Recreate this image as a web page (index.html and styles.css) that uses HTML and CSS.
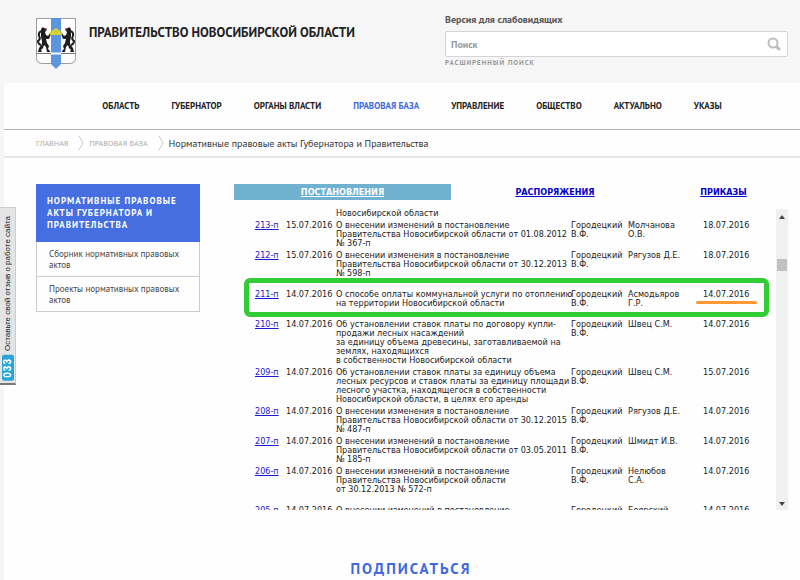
FILE: index.html
```html
<!DOCTYPE html>
<html lang="ru">
<head>
    <meta charset="UTF-8">
    <meta name="viewport" content="width=device-width, initial-scale=1.0">
    <title>Правительство Новосибирской области</title>
    <link rel="stylesheet" href="styles.css">
</head>
<body>
    <header class="header">
        <a class="logo" href="#" aria-label="Главная">
            <svg width="40" height="52" viewBox="0 0 40 52">
                <path d="M.5 .5h39v39q0 6-6 6H6.500q-6 0-6-6z" fill="#fff" stroke="#9a9a9a"/>
                <path d="M15 0h10v46l-5 5-5-5z" fill="#5b95e2"/>
                <path d="M1 35.500h38" stroke="#777"/>
                <path d="M15 35.500h10" stroke="#fff" stroke-width="2"/>
                <g id="sable" fill="#1f1f1f">
                    <path d="M5 11l2-2 1 1 3 1-1 2-1 1 1 3 2 1 2-3 1 1-2 5-3 0 1 4 2 3-1 3 2 2v1h-3l-1-5-2-2-1 3-2 2 1 2H2l1-4 3-4 0-3-1-4z"/>
                    <path d="M5 13q-3 2-2 5 2 3-1 5 0 3 3 4" fill="none" stroke="#1f1f1f" stroke-width="2"/>
                    <path d="M9 11h2" stroke="#d33"/>
                </g>
                <use href="#sable" transform="matrix(-1 0 0 1 40 0)"/>
                <path d="M14 17v-3l6-4 6 4v3z" fill="#d6cf3a"/>
            </svg>
        </a>
        <h1 class="title">ПРАВИТЕЛЬСТВО НОВОСИБИРСКОЙ ОБЛАСТИ</h1>
        <form class="search">
            <a class="vision" href="#">Версия для слабовидящих</a>
            <div class="search-box">
                <input type="text" placeholder="Поиск" aria-label="Поиск">
                <button type="submit" aria-label="Найти">
                    <svg width="14" height="14" viewBox="0 0 14 14" fill="none" stroke="#bdbdbd">
                        <circle cx="6" cy="6" r="4.500" stroke-width="2"/>
                        <path d="M10 10l2 2" stroke-width="3" stroke-linecap="round"/>
                    </svg>
                </button>
            </div>
            <a class="advanced" href="#">РАСШИРЕННЫЙ ПОИСК</a>
        </form>
    </header>

    <div class="page">
        <nav class="menu">
            <a href="#">ОБЛАСТЬ</a>
            <a href="#">ГУБЕРНАТОР</a>
            <a href="#">ОРГАНЫ ВЛАСТИ</a>
            <a href="#" class="active">ПРАВОВАЯ БАЗА</a>
            <a href="#">УПРАВЛЕНИЕ</a>
            <a href="#">ОБЩЕСТВО</a>
            <a href="#">АКТУАЛЬНО</a>
            <a href="#">УКАЗЫ</a>
        </nav>

        <div class="crumbs">
            <a href="#">ГЛАВНАЯ</a>
            <svg width="6" height="14" viewBox="0 0 6 14" fill="none" stroke="#ccc"><path d="M1 0l4 7-4 7"/></svg>
            <a href="#">ПРАВОВАЯ БАЗА</a>
            <svg width="6" height="14" viewBox="0 0 6 14" fill="none" stroke="#ccc"><path d="M1 0l4 7-4 7"/></svg>
            <span>Нормативные правовые акты Губернатора и Правительства</span>
        </div>

        <div class="content">
            <aside class="sidebar">
                <h2>НОРМАТИВНЫЕ ПРАВОВЫЕ АКТЫ ГУБЕРНАТОРА И ПРАВИТЕЛЬСТВА</h2>
                <a href="#">Сборник нормативных правовых актов</a>
                <a href="#">Проекты нормативных правовых актов</a>
            </aside>

            <main class="docs">
                <div class="tabs">
                    <a href="#" class="active">ПОСТАНОВЛЕНИЯ</a>
                    <a href="#">РАСПОРЯЖЕНИЯ</a>
                    <a href="#">ПРИКАЗЫ</a>
                </div>
                <div class="list">
                    <div class="list-view">
                        <table>
                            <colgroup>
                                <col class="c-num"><col class="c-date"><col class="c-name"><col class="c-sign"><col class="c-auth"><col class="c-pub">
                            </colgroup>
                            <tr>
                                <td></td><td></td>
                                <td>Новосибирской области</td>
                                <td></td><td></td><td></td>
                            </tr>
                            <tr>
                                <td><a href="#">213-п</a></td>
                                <td>15.07.2016</td>
                                <td>О внесении изменений в постановление<br>Правительства Новосибирской области от 01.08.2012<br>№ 367-п</td>
                                <td>Городецкий<br>В.Ф.</td>
                                <td>Молчанова<br>О.В.</td>
                                <td>18.07.2016</td>
                            </tr>
                            <tr class="spaced">
                                <td><a href="#">212-п</a></td>
                                <td>15.07.2016</td>
                                <td>О внесении изменения в постановление<br>Правительства Новосибирской области от 30.12.2013<br>№ 598-п</td>
                                <td>Городецкий<br>В.Ф.</td>
                                <td>Рягузов Д.Е.</td>
                                <td>18.07.2016</td>
                            </tr>
                            <tr class="spaced">
                                <td><a href="#">211-п</a></td>
                                <td>14.07.2016</td>
                                <td>О способе оплаты коммунальной услуги по отоплению<br>на территории Новосибирской области</td>
                                <td>Городецкий<br>В.Ф.</td>
                                <td>Асмодьяров<br>Г.Р.</td>
                                <td><span class="underlined">14.07.2016</span></td>
                            </tr>
                            <tr>
                                <td><a href="#">210-п</a></td>
                                <td>14.07.2016</td>
                                <td>Об установлении ставок платы по договору купли-<br>продажи лесных насаждений<br>за единицу объема древесины, заготавливаемой на<br>землях, находящихся<br>в собственности Новосибирской области</td>
                                <td>Городецкий<br>В.Ф.</td>
                                <td>Швец С.М.</td>
                                <td>14.07.2016</td>
                            </tr>
                            <tr>
                                <td><a href="#">209-п</a></td>
                                <td>14.07.2016</td>
                                <td>Об установлении ставок платы за единицу объема<br>лесных ресурсов и ставок платы за единицу площади<br>лесного участка, находящегося в собственности<br>Новосибирской области, в целях его аренды</td>
                                <td>Городецкий<br>В.Ф.</td>
                                <td>Швец С.М.</td>
                                <td>15.07.2016</td>
                            </tr>
                            <tr>
                                <td><a href="#">208-п</a></td>
                                <td>14.07.2016</td>
                                <td>О внесении изменения в постановление<br>Правительства Новосибирской области от 30.12.2015<br>№ 487-п</td>
                                <td>Городецкий<br>В.Ф.</td>
                                <td>Рягузов Д.Е.</td>
                                <td>14.07.2016</td>
                            </tr>
                            <tr>
                                <td><a href="#">207-п</a></td>
                                <td>14.07.2016</td>
                                <td>О внесении изменений в постановление<br>Правительства Новосибирской области от 03.05.2011<br>№ 185-п</td>
                                <td>Городецкий<br>В.Ф.</td>
                                <td>Шмидт И.В.</td>
                                <td>14.07.2016</td>
                            </tr>
                            <tr class="spaced">
                                <td><a href="#">206-п</a></td>
                                <td>14.07.2016</td>
                                <td>О внесении изменений в постановление<br>Правительства Новосибирской области<br>от 30.12.2013 № 572-п</td>
                                <td>Городецкий<br>В.Ф.</td>
                                <td>Нелюбов<br>С.А.</td>
                                <td>14.07.2016</td>
                            </tr>
                            <tr>
                                <td><a href="#">205-п</a></td>
                                <td>14.07.2016</td>
                                <td>О внесении изменений в постановление</td>
                                <td>Городецкий</td>
                                <td>Боярский</td>
                                <td>14.07.2016</td>
                            </tr>
                        </table>
                    </div>
                    <div class="scrollbar">
                        <svg width="6" height="4" viewBox="0 0 6 4"><path d="M0 4l3-4 3 4z" fill="#444"/></svg>
                        <div class="thumb"></div>
                        <svg width="6" height="4" viewBox="0 0 6 4"><path d="M0 0l3 4 3-4z" fill="#444"/></svg>
                    </div>
                    <div class="frame"></div>
                </div>
            </main>
        </div>

        <h2 class="subscribe">ПОДПИСАТЬСЯ</h2>
    </div>

    <a class="feedback" href="#"><span>Оставьте свой отзыв о работе сайта</span><b>033</b></a>
</body>
</html>
```
FILE: styles.css
```css
* {
    box-sizing: border-box;
}
body {
    margin: 0;
    background-color: #f6f6f6;
    color: #333;
    font-family: "PT Sans", "Open Sans", "Noto Sans", sans-serif;
    overflow: hidden;
}
a {
    color: inherit;
    text-decoration: none;
}
.header {
    display: flex;
    align-items: flex-start;
    height: 83px;
    padding: 0 12px 0 36px;
}
.logo {
    margin-top: 18px;
    height: 52px;
}
.title {
    flex: 1;
    margin: 24px 0 0 13px;
    font-size: 13px;
    line-height: 18px;
    color: #222;
    white-space: nowrap;
}
.search {
    display: flex;
    flex-direction: column;
    align-items: flex-start;
    width: 343px;
    padding-top: 13px;
}
.vision {
    font-size: 10px;
    line-height: 14px;
    font-weight: bold;
    color: #555;
}
.search-box {
    display: flex;
    align-items: center;
    width: 100%;
    height: 26px;
    margin-top: 4px;
    border: 1px solid #d4d4d4;
    border-radius: 2px;
    background-color: #fff;
}
.search-box input {
    flex: 1;
    padding: 0 5px;
    border: 0;
    outline: 0;
    background: none;
    font-family: inherit;
    font-size: 10px;
    font-weight: bold;
}
.search-box input::placeholder {
    color: #999;
}
.search-box button {
    display: flex;
    padding: 0 6px;
    border: 0;
    background: none;
}
.advanced {
    font-size: 7px;
    font-weight: bold;
    line-height: 12px;
    letter-spacing: 1px;
    color: #999;
}
.page {
    min-height: 497px;
    margin-left: 4px;
    background-color: #fefefe;
}
.menu {
    display: flex;
    justify-content: center;
    gap: 32px;
    padding-left: 20px;
    border-bottom: 1px solid #b5b5b5;
    font-size: 9px;
    font-weight: bold;
    line-height: 46px;
    color: #222;
}
.menu .active {
    color: #4169dd;
}
.crumbs {
    display: flex;
    align-items: center;
    gap: 10px;
    height: 28px;
    padding-left: 32px;
    border-bottom: 2px solid #e6e6e6;
    font-size: 10px;
}
.crumbs a {
    font-size: 8px;
    color: #aaa;
}
.crumbs svg {
    margin-right: -5px;
}
.content {
    display: flex;
    align-items: flex-start;
    padding: 26px 12px 0 32px;
}
.sidebar {
    width: 164px;
    border: 1px solid #ccc;
    border-top: 0;
    font-size: 9px;
    line-height: 11px;
    color: #444;
}
.sidebar h2 {
    margin: 0 -1px;
    padding: 11px;
    background-color: #456ee0;
    color: #fff;
    font-size: 9px;
    line-height: 12px;
    letter-spacing: 1px;
}
.sidebar a {
    display: block;
    padding: 6px 12px;
}
.sidebar a + a {
    border-top: 1px solid #ccc;
}
.docs {
    flex: 1;
    margin-left: 34px;
    font-family: "DejaVu Sans Condensed", "DejaVu Sans", sans-serif;
}
.tabs {
    display: grid;
    grid-template-columns: 217fr 208fr 129fr;
    font-size: 9px;
    font-weight: bold;
    line-height: 16px;
    text-align: center;
}
.tabs a {
    color: #00c;
    text-decoration: underline;
}
.tabs .active {
    background-color: #70b1cf;
    color: #fff;
}
.list {
    position: relative;
    display: flex;
    height: 301px;
    margin-top: 9px;
}
.list-view {
    flex: 1;
    overflow: hidden;
    padding-left: 21px;
}
.list table {
    width: 100%;
    table-layout: fixed;
    border-collapse: collapse;
    font-size: 9px;
    line-height: 9px;
    color: #222;
}
.c-num { width: 31px; }
.c-date { width: 50px; }
.c-sign { width: 57px; }
.c-auth { width: 75px; }
.c-pub { width: 73px; }
.list td {
    padding: 0 0 3px;
    vertical-align: top;
    white-space: nowrap;
}
.list .spaced td {
    padding-bottom: 12px;
}
.list td a {
    color: #1a1ad0;
    text-decoration: underline;
}
.underlined {
    position: relative;
}
.underlined::after {
    content: "";
    position: absolute;
    left: -7px;
    right: -8px;
    top: 12px;
    height: 3px;
    border-radius: 2px;
    background-color: #ff9933;
}
.scrollbar {
    display: flex;
    flex-direction: column;
    align-items: center;
    justify-content: space-between;
    width: 12px;
    padding: 6px 1px 4px;
    background-color: #f0f0f0;
}
.thumb {
    width: 10px;
    height: 12px;
    margin: 40px 0 auto;
    background-color: #c1c1c1;
}
.frame {
    position: absolute;
    left: 10px;
    right: 19px;
    top: 69px;
    height: 39px;
    border: 5px solid #32cc36;
    border-radius: 6px;
}
.subscribe {
    margin: 0;
    padding: 47px 0 0 18px;
    font-size: 15px;
    line-height: 24px;
    letter-spacing: 2px;
    text-align: center;
    color: #4169dd;
}
.feedback {
    position: fixed;
    left: 0;
    top: 207px;
    display: flex;
    flex-direction: column;
    align-items: center;
    gap: 4px;
    width: 16px;
    height: 178px;
    padding: 8px 0 3px;
    border: 1px solid #ccc;
    border-left: 0;
    border-bottom: 2px solid #777;
    background-color: #e4e4e4;
    font: 8px/12px "Liberation Sans", Arial, sans-serif;
    color: #222;
}
.feedback span,
.feedback b {
    writing-mode: vertical-rl;
    transform: rotate(180deg);
    white-space: nowrap;
}
.feedback b {
    padding: 3px 0;
    border-radius: 2px;
    background-color: #2ba5d5;
    color: #fff;
    font-size: 10px;
    letter-spacing: 1px;
}
```
